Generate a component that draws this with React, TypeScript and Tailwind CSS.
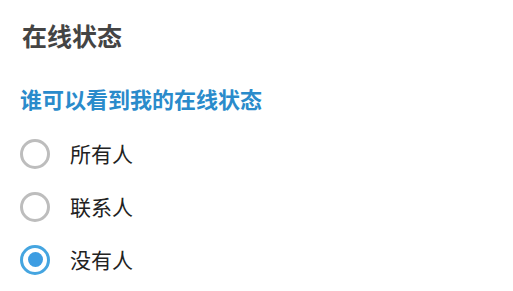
import React, { useState } from 'react'

const options = ['所有人', '联系人', '没有人']

const Radio = ({ checked }: { checked: boolean }) => (
  <span
    className={`flex items-center justify-center w-[30px] h-[30px] rounded-full border-[3px] ${
      checked ? 'border-[#45a5e0]' : 'border-[#bdbdbd]'
    }`}
  >
    {checked && <span className="w-[15px] h-[15px] rounded-full bg-[#3d9de2]" />}
  </span>
)

const App = () => {
  const [selected, setSelected] = useState(2)
  return (
    <div
      className="w-[513px] h-[291px] bg-white pl-[20px] pt-[20px]"
      style={{ fontFamily: '"Noto Sans CJK SC", "Noto Sans", sans-serif' }}
    >
      <h1 className="pl-[2px] text-[25px] leading-[30px] font-bold text-[#444444]">在线状态</h1>
      <h2 className="mt-[33px] text-[22px] leading-[30px] font-bold text-[#2a8bcb]">
        谁可以看到我的在线状态
      </h2>
      <div className="mt-[14px] flex flex-col">
        {options.map((label, i) => (
          <button
            key={label}
            onClick={() => setSelected(i)}
            className="flex items-center h-[53px] gap-[20px] text-left"
          >
            <Radio checked={selected === i} />
            <span className="text-[21px] text-[#222222]">{label}</span>
          </button>
        ))}
      </div>
    </div>
  )
}

export default App
